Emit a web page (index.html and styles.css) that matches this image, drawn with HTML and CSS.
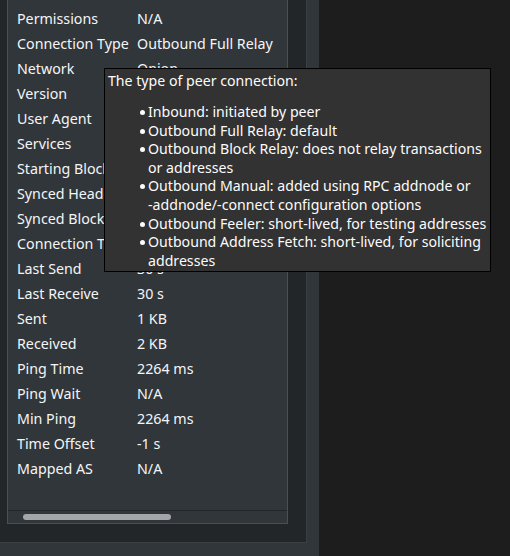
FILE: index.html
```html
<!DOCTYPE html>
<html>
<head>
<meta charset="utf-8">
<link rel="stylesheet" href="styles.css">
</head>
<body>
<div class="window">
  <div class="frame">
    <div class="panel">
      <div class="rows">
        <div class="row"><span class="label">Permissions</span><span class="value">N/A</span></div>
        <div class="row"><span class="label">Connection Type</span><span class="value">Outbound Full Relay</span></div>
        <div class="row"><span class="label">Network</span><span class="value">Onion</span></div>
        <div class="row"><span class="label">Version</span><span class="value">70016</span></div>
        <div class="row"><span class="label">User Agent</span><span class="value">/Satoshi:0.21.0/</span></div>
        <div class="row"><span class="label">Services</span><span class="value">NETWORK &amp; WITNESS</span></div>
        <div class="row"><span class="label">Starting Block</span><span class="value">670000</span></div>
        <div class="row"><span class="label">Synced Headers</span><span class="value">670012</span></div>
        <div class="row"><span class="label">Synced Blocks</span><span class="value">670012</span></div>
        <div class="row"><span class="label">Connection Time</span><span class="value">1 m 2 s</span></div>
        <div class="row"><span class="label">Last Send</span><span class="value">30 s</span></div>
        <div class="row"><span class="label">Last Receive</span><span class="value">30 s</span></div>
        <div class="row"><span class="label">Sent</span><span class="value">1 KB</span></div>
        <div class="row"><span class="label">Received</span><span class="value">2 KB</span></div>
        <div class="row"><span class="label">Ping Time</span><span class="value">2264 ms</span></div>
        <div class="row"><span class="label">Ping Wait</span><span class="value">N/A</span></div>
        <div class="row"><span class="label">Min Ping</span><span class="value">2264 ms</span></div>
        <div class="row"><span class="label">Time Offset</span><span class="value">-1 s</span></div>
        <div class="row"><span class="label">Mapped AS</span><span class="value">N/A</span></div>
      </div>
      <div class="hscroll"><div class="handle"></div></div>
    </div>
  </div>
</div>
<div class="tooltip">
  <p class="tip-title">The type of peer connection:</p>
  <ul class="tip-list">
    <li>Inbound: initiated by peer</li>
    <li>Outbound Full Relay: default</li>
    <li>Outbound Block Relay: does not relay transactions or addresses</li>
    <li>Outbound Manual: added using RPC addnode or <span class="nowrap">-addnode/-connect</span> configuration options</li>
    <li>Outbound Feeler: short-lived, for testing addresses</li>
    <li>Outbound Address Fetch: short-lived, for soliciting addresses</li>
  </ul>
</div>
</body>
</html>
```

FILE: styles.css
```css
html, body {
  margin: 0;
  padding: 0;
}
body {
  width: 510px;
  height: 556px;
  background: #1d1d1d;
  font-family: "Noto Sans", "DejaVu Sans", sans-serif;
  font-size: 14.25px;
  color: #f4f5f6;
  overflow: hidden;
  position: relative;
}
.window {
  width: 319px;
  height: 556px;
  background: #31363b;
}
.frame {
  width: 307px;
  height: 543px;
  box-sizing: border-box;
  background: #232629;
  border-right: 1px solid #3a3f44;
  border-bottom: 1px solid #3a3f44;
  padding-left: 7px;
}
.panel {
  width: 281px;
  height: 524px;
  box-sizing: border-box;
  background: #31363b;
  border: 1px solid #4a4f54;
  border-top: none;
  display: flex;
  flex-direction: column;
}
.rows {
  flex: 1;
  padding-top: 6px;
  padding-left: 9px;
}
.row {
  display: flex;
  height: 25px;
  line-height: 25px;
  white-space: nowrap;
}
.label {
  width: 120px;
  flex: none;
}
.hscroll {
  height: 12px;
  border-top: 1px solid #232629;
  display: flex;
  align-items: center;
  padding-left: 15px;
}
.handle {
  width: 148px;
  height: 6px;
  border-radius: 3px;
  background: #a3a5a7;
}
.tooltip {
  position: absolute;
  left: 104px;
  top: 68px;
  width: 387px;
  height: 204px;
  box-sizing: border-box;
  background: #323232;
  border: 1px solid #000;
  color: #fcfcfc;
  padding: 3px 0 0 3px;
  font-size: 14.15px;
  line-height: 18.6px;
  overflow: hidden;
}
.tip-title {
  margin: 0 0 12.4px 0;
}
.tip-list {
  margin: 0;
  padding: 0 0 0 40px;
  list-style: none;
}
.tip-list li::before {
  content: "";
  display: inline-block;
  width: 5px;
  height: 5px;
  border-radius: 50%;
  background: #fcfcfc;
  margin-left: -8px;
  margin-right: 3px;
  vertical-align: 2px;
}
.nowrap {
  white-space: nowrap;
}
```
